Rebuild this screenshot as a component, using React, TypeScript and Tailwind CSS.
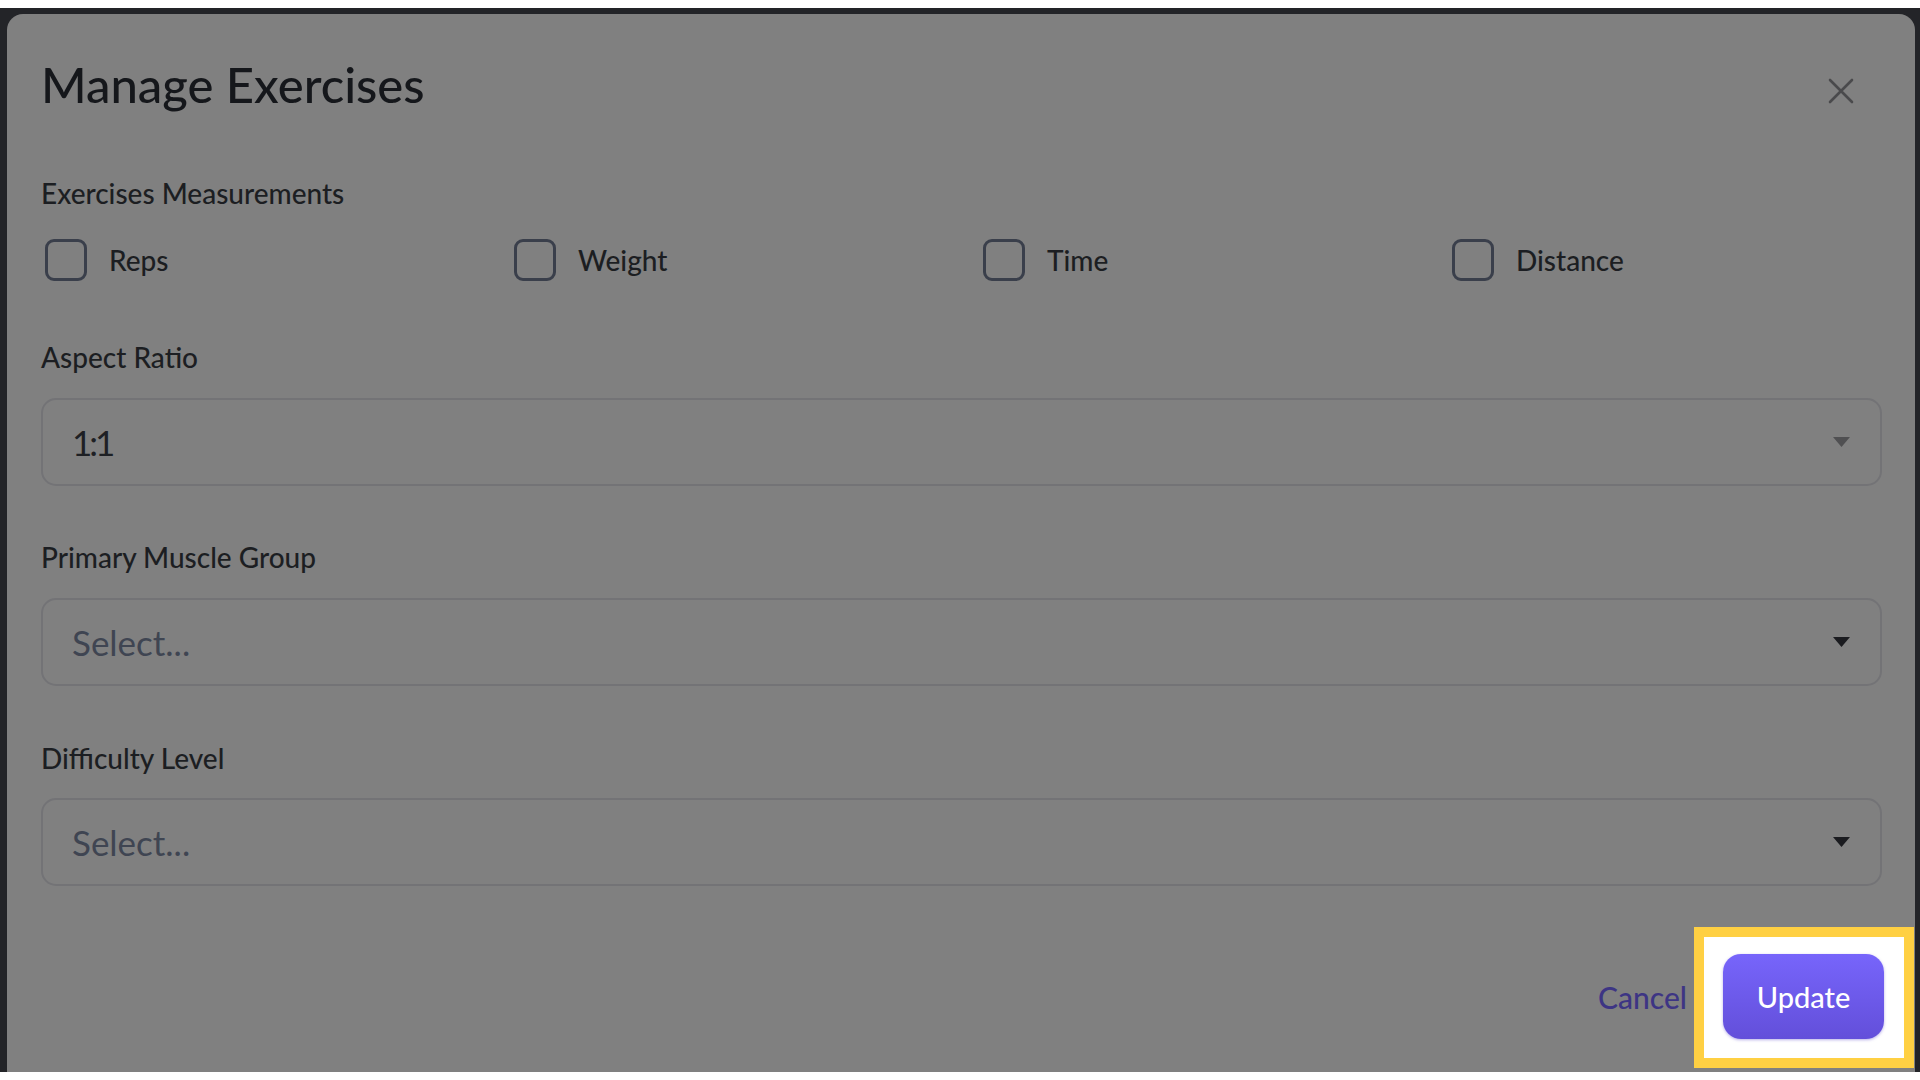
import React from "react";

const font = { fontFamily: "Lato, 'Noto Sans', sans-serif" };

function Caret({ dim }: { dim?: boolean }) {
  return (
    <svg width="17" height="10" viewBox="0 0 17 10" className="shrink-0">
      <path d="M0 0 L17 0 L8.5 10 Z" fill={dim ? "#505052" : "#1b1c20"} />
    </svg>
  );
}

function Check({ label }: { label: string }) {
  return (
    <div className="w-[469px] shrink-0 flex items-center pl-[4px]">
      <div className="w-[42px] h-[42px] rounded-[9px] border-[3px] border-[#3a3f4b]" />
      <span className="ml-[22px] text-[28px] leading-[32px] font-medium text-[#1c1e22]">{label}</span>
    </div>
  );
}

function Select({ value, placeholder, dim }: { value: string; placeholder?: boolean; dim?: boolean }) {
  return (
    <div className="h-[88px] rounded-[15px] border-2 border-[#737376] flex items-center justify-between pl-[29px] pr-[30px]">
      <span
        className={
          "text-[35px] leading-[40px] " +
          (placeholder ? "text-[#3f4552]" : "text-[#1e2024] tracking-[-3px]")
        }
      >
        {value}
      </span>
      <Caret dim={dim} />
    </div>
  );
}

function Label({ children, className }: { children: React.ReactNode; className?: string }) {
  return (
    <div className={"text-[28px] leading-[30px] font-medium text-[#1c1e22] " + (className || "")}>{children}</div>
  );
}

export default function App() {
  return (
    <div className="w-[1920px] h-[1080px] bg-white overflow-hidden" style={font}>
      <div className="mt-[8px] h-[1064px] bg-[#232428] pt-[6px] pl-[7px] pr-[5px] overflow-hidden">
        <div className="h-[1090px] rounded-[16px] bg-[#808080] pl-[34px] pr-[33px] flex flex-col">
          <div className="mt-[42px] h-[56px] flex justify-between items-center">
            <h1 className="text-[49px] leading-[56px] font-medium text-[#15171b]">Manage Exercises</h1>
            <svg width="28" height="28" viewBox="0 0 28 28" className="mt-[14px] mr-[27px]">
              <path d="M3 3 L25 25 M25 3 L3 25" stroke="#4a4a4c" strokeWidth="2.6" strokeLinecap="round" />
            </svg>
          </div>
          <Label className="mt-[66px]">Exercises Measurements</Label>
          <div className="mt-[31px] flex">
            <Check label="Reps" />
            <Check label="Weight" />
            <Check label="Time" />
            <Check label="Distance" />
          </div>
          <Label className="mt-[61px]">Aspect Ratio</Label>
          <div className="mt-[26px]">
            <Select value="1:1" dim />
          </div>
          <Label className="mt-[56px]">Primary Muscle Group</Label>
          <div className="mt-[26px]">
            <Select value="Select..." placeholder />
          </div>
          <Label className="mt-[57px]">Difficulty Level</Label>
          <div className="mt-[25px]">
            <Select value="Select..." placeholder />
          </div>
          <div className="mt-[41px] flex justify-end items-center -mr-[32px]">
            <span className="text-[30px] font-medium text-[#3d3584] mr-[7px]">Cancel</span>
            <div className="w-[220px] h-[141px] border-[10px] border-[#ffd043] bg-white flex items-center justify-center">
              <button className="w-[161px] h-[85px] rounded-[18px] bg-gradient-to-b from-[#7765fb] to-[#634fda] text-white text-[29px] font-medium shadow-[0_1px_3px_rgba(80,60,200,0.4)] -mt-[2px] -ml-[1px]">
                Update
              </button>
            </div>
          </div>
        </div>
      </div>
    </div>
  );
}
